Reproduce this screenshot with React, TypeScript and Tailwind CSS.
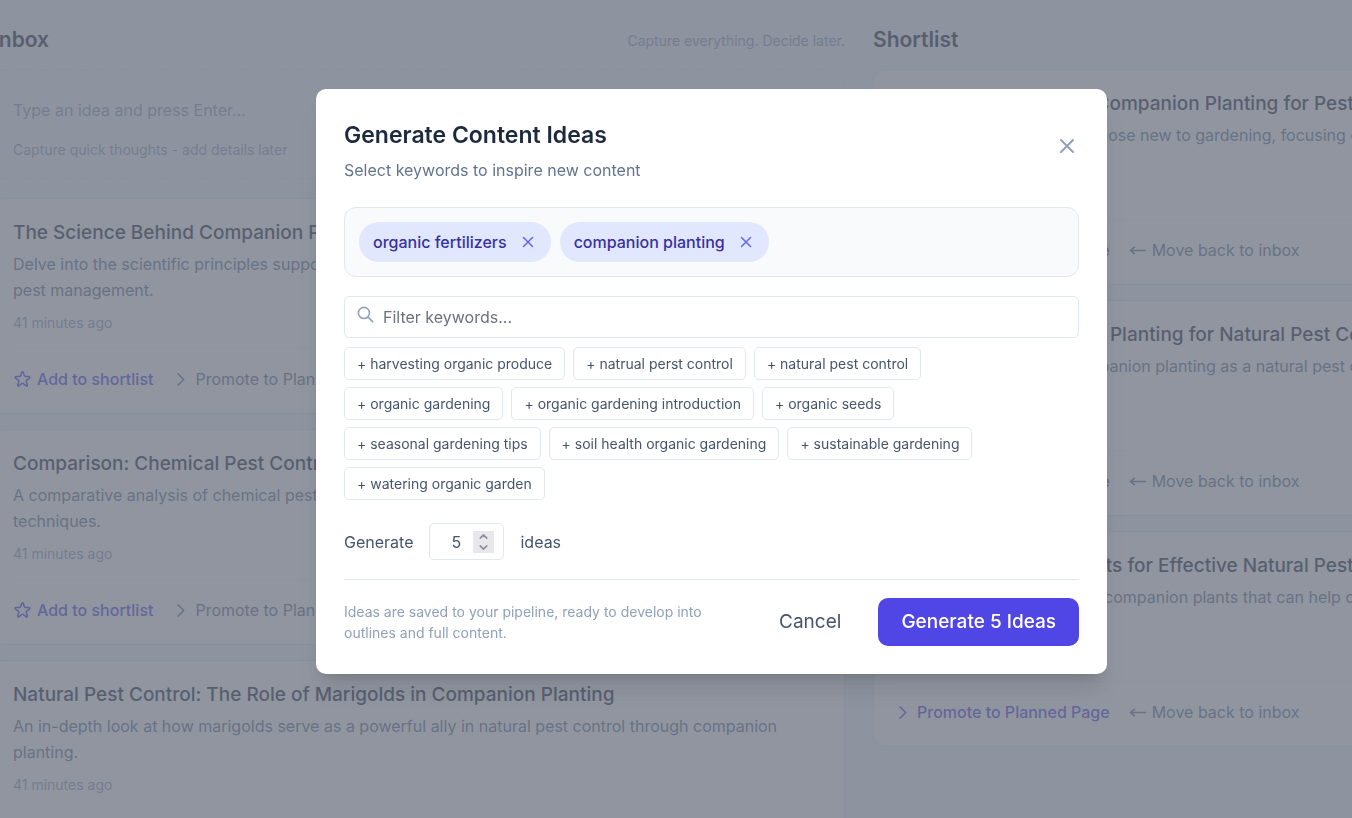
import { useState } from "react";
import type { ReactNode } from "react";

interface Idea {
    id: number;
    title: string;
    description: string;
    age: string;
}

const inboxIdeas: Idea[] = [
    {
        id: 1,
        title: "The Science Behind Companion Planting",
        description:
            "Delve into the scientific principles supporting companion planting and how it also contributes to natural pest management.",
        age: "41 minutes ago",
    },
    {
        id: 2,
        title: "Comparison: Chemical Pest Control vs. Companion Planting",
        description:
            "A comparative analysis of chemical pest control methods and the benefits of natural companion planting techniques.",
        age: "41 minutes ago",
    },
    {
        id: 3,
        title: "Natural Pest Control: The Role of Marigolds in Companion Planting",
        description:
            "An in-depth look at how marigolds serve as a powerful ally in natural pest control through companion planting.",
        age: "41 minutes ago",
    },
];

const shortlistIdeas: Idea[] = [
    {
        id: 4,
        title: "A Beginner's Guide to Companion Planting for Pest Control",
        description:
            "A gentle guide tailored for those new to gardening, focusing on how to use companion planting to manage pests in the garden.",
        age: "41 minutes ago",
    },
    {
        id: 5,
        title: "Features of Companion Planting for Natural Pest Control",
        description:
            "Introduces the uses of companion planting as a natural pest control method and how it supports a healthy garden.",
        age: "41 minutes ago",
    },
    {
        id: 6,
        title: "Top 10 Companion Plants for Effective Natural Pest Control",
        description:
            "A look at the most effective companion plants that can help deter pests and improve the health of your garden.",
        age: "41 minutes ago",
    },
];

const allKeywords = [
    "harvesting organic produce",
    "natrual perst control",
    "natural pest control",
    "organic gardening",
    "organic gardening introduction",
    "organic seeds",
    "seasonal gardening tips",
    "soil health organic gardening",
    "sustainable gardening",
    "watering organic garden",
];

const paths = {
    close: "M6 18L18 6M6 6l12 12",
    search: "M21 21l-6-6m2-5a7 7 0 11-14 0 7 7 0 0114 0z",
    chevronRight: "M9 5l7 7-7 7",
    chevronUp: "M6 15l6-6 6 6",
    chevronDown: "M6 9l6 6 6-6",
    arrowLeft: "M22 12H3m5-4l-5 4 5 4",
    star: "M11.049 2.927c.3-.921 1.603-.921 1.902 0l1.519 4.674a1 1 0 00.95.69h4.915c.969 0 1.371 1.24.588 1.81l-3.976 2.888a1 1 0 00-.363 1.118l1.518 4.674c.3.922-.755 1.688-1.538 1.118l-3.976-2.888a1 1 0 00-1.176 0l-3.976 2.888c-.783.57-1.838-.197-1.538-1.118l1.518-4.674a1 1 0 00-.363-1.118l-3.976-2.888c-.784-.57-.38-1.81.588-1.81h4.914a1 1 0 00.951-.69l1.519-4.674z",
};

function Icon({ d, className }: { d: string; className: string }) {
    return (
        <svg
            viewBox="0 0 24 24"
            fill="none"
            stroke="currentColor"
            strokeWidth={2}
            strokeLinecap="round"
            strokeLinejoin="round"
            aria-hidden="true"
            className={`shrink-0 ${className}`}
        >
            <path d={d} />
        </svg>
    );
}

function IdeaCard({ idea, children }: { idea: Idea; children: ReactNode }) {
    return (
        <article className="rounded-xl border border-slate-200 bg-white px-[19px] pt-5 pb-[21px]">
            <h3 className="text-[19px] leading-7 font-medium text-slate-800">{idea.title}</h3>
            <p className="mt-1 text-[16px] leading-[26px] text-slate-500">{idea.description}</p>
            <p className="mt-[10px] text-[14px] leading-5 text-slate-400">{idea.age}</p>
            <div className="mt-[15px] flex items-center gap-[18px] border-t border-slate-100 pt-[17px] text-[16px] leading-[26px]">
                {children}
            </div>
        </article>
    );
}

function Board() {
    return (
        <main className="h-screen overflow-hidden bg-slate-100">
            <div className="-ml-[7px] grid w-[calc(125%+42px)] grid-cols-2 gap-7 pt-[26px]">
                <section>
                    <header className="flex items-center justify-between">
                        <h2 className="text-[21px] leading-7 font-semibold text-slate-800">Inbox</h2>
                        <p className="text-[14px] text-slate-400">Capture everything. Decide later.</p>
                    </header>
                    <div className="mt-[15px] rounded-xl border border-dashed border-slate-200 bg-slate-50 px-[19px] pt-[27px] pb-[18px]">
                        <input
                            type="text"
                            aria-label="New idea"
                            placeholder="Type an idea and press Enter…"
                            className="block w-full bg-transparent text-[16px] leading-[26px] placeholder:text-slate-400"
                        />
                        <p className="mt-[17px] text-[14px] leading-5 text-slate-400">
                            Capture quick thoughts - add details later
                        </p>
                    </div>
                    <div className="mt-[19px] flex flex-col gap-[15px]">
                        {inboxIdeas.map((idea) => (
                            <IdeaCard key={idea.id} idea={idea}>
                                <button className="flex items-center gap-[5px] font-medium text-[#4f46e5]">
                                    <Icon d={paths.star} className="size-[19px]" /> Add to shortlist
                                </button>
                                <button className="flex items-center gap-[5px] text-slate-500">
                                    <Icon d={paths.chevronRight} className="size-[19px]" /> Promote to Planned Page
                                </button>
                            </IdeaCard>
                        ))}
                    </div>
                </section>

                <section>
                    <h2 className="text-[21px] leading-7 font-semibold text-slate-800">Shortlist</h2>
                    <div className="mt-[15px] flex flex-col gap-[15px]">
                        {shortlistIdeas.map((idea) => (
                            <IdeaCard key={idea.id} idea={idea}>
                                <button className="flex items-center gap-[5px] font-medium text-[#4f46e5]">
                                    <Icon d={paths.chevronRight} className="size-[19px]" /> Promote to Planned Page
                                </button>
                                <button className="flex items-center gap-[5px] text-slate-500">
                                    <Icon d={paths.arrowLeft} className="size-[19px]" /> Move back to inbox
                                </button>
                            </IdeaCard>
                        ))}
                    </div>
                </section>
            </div>
        </main>
    );
}

export default function App() {
    const [selected, setSelected] = useState(["organic fertilizers", "companion planting"]);
    const [filter, setFilter] = useState("");
    const [count, setCount] = useState(5);

    const available = allKeywords.filter(
        (k) => !selected.includes(k) && k.includes(filter.toLowerCase())
    );

    return (
        <div className="font-['Inter',sans-serif]">
            <Board />

            <div className="fixed inset-0 flex items-start justify-center bg-[#6b7280]/75 pt-[89px] pl-[71px]">
                <div
                    role="dialog"
                    aria-modal="true"
                    aria-labelledby="dialog-title"
                    className="w-full max-w-[791px] rounded-[10px] bg-white p-7 shadow-xl"
                >
                    {/* Header */}
                    <div className="flex items-start justify-between">
                        <div>
                            <h2 id="dialog-title" className="text-[23px] leading-9 font-semibold text-slate-800">
                                Generate Content Ideas
                            </h2>
                            <p className="mt-1 text-[16px] leading-[26px] text-slate-500">
                                Select keywords to inspire new content
                            </p>
                        </div>
                        <button aria-label="Close" className="mt-[17px] text-slate-400">
                            <Icon d={paths.close} className="size-6" />
                        </button>
                    </div>

                    {/* Selected keywords */}
                    <div className="mt-6 flex flex-wrap gap-[9px] rounded-xl border border-slate-200 bg-slate-50 p-[14px]">
                        {selected.map((keyword) => (
                            <span
                                key={keyword}
                                className="flex h-10 items-center gap-3 rounded-full bg-[#e0e7ff] px-[14px] text-[16px] font-medium text-[#3730a3]"
                            >
                                {keyword}
                                <button
                                    aria-label={`Remove ${keyword}`}
                                    onClick={() => setSelected(selected.filter((k) => k !== keyword))}
                                    className="text-[#6366f1]"
                                >
                                    <Icon d={paths.close} className="size-[18px]" />
                                </button>
                            </span>
                        ))}
                    </div>

                    {/* Filter */}
                    <div className="mt-[19px] flex h-[42px] items-center gap-2 rounded-[5px] border border-slate-200 pl-[11px]">
                        <Icon d={paths.search} className="mb-[5px] size-[19px] text-slate-400" />
                        <input
                            type="text"
                            aria-label="Filter keywords"
                            placeholder="Filter keywords..."
                            value={filter}
                            onChange={(e) => setFilter(e.target.value)}
                            className="h-full min-w-0 flex-1 text-[16px] text-slate-600 outline-none placeholder:text-gray-500"
                        />
                    </div>
                    <div className="mt-[9px] flex flex-wrap gap-x-2 gap-y-[7px]">
                        {available.map((keyword) => (
                            <button
                                key={keyword}
                                onClick={() => setSelected([...selected, keyword])}
                                className="h-[33px] rounded-[5px] border border-slate-200 px-3 text-[14px] text-slate-600"
                            >
                                + {keyword}
                            </button>
                        ))}
                    </div>

                    {/* Count */}
                    <div className="mt-[23px] flex items-center gap-4 text-[16px] text-slate-600">
                        <label htmlFor="count">Generate</label>
                        <div className="flex h-[37px] w-[75px] items-center rounded-[5px] border border-slate-200 px-[9px]">
                            <input
                                id="count"
                                type="number"
                                min={1}
                                max={10}
                                value={count}
                                onChange={(e) => setCount(Number(e.target.value))}
                                className="min-w-0 flex-1 text-center outline-none [appearance:textfield] [&::-webkit-inner-spin-button]:appearance-none"
                            />
                            <div className="flex w-[21px] flex-col bg-[#e8e8ec] text-[#8e8e98]">
                                <button
                                    aria-label="More ideas"
                                    onClick={() => setCount(Math.min(10, count + 1))}
                                    className="flex h-[11px] items-center justify-center"
                                >
                                    <Icon d={paths.chevronUp} className="size-[13px] stroke-3" />
                                </button>
                                <button
                                    aria-label="Fewer ideas"
                                    onClick={() => setCount(Math.max(1, count - 1))}
                                    className="flex h-[11px] items-center justify-center"
                                >
                                    <Icon d={paths.chevronDown} className="size-[13px] stroke-3" />
                                </button>
                            </div>
                        </div>
                        <span>ideas</span>
                    </div>

                    {/* Footer */}
                    <div className="mt-[19px] flex items-center justify-between border-t border-slate-200 pt-[18px]">
                        <p className="max-w-[380px] text-[14px] leading-[21px] text-slate-400">
                            Ideas are saved to your pipeline, ready to develop into outlines and full content.
                        </p>
                        <div className="flex gap-[13px] text-[19px]">
                            <button className="h-12 px-6 text-slate-600">Cancel</button>
                            <button className="h-12 rounded-[10px] bg-[#4f46e5] px-[23px] font-medium text-white">
                                Generate {count} Ideas
                            </button>
                        </div>
                    </div>
                </div>
            </div>
        </div>
    );
}
